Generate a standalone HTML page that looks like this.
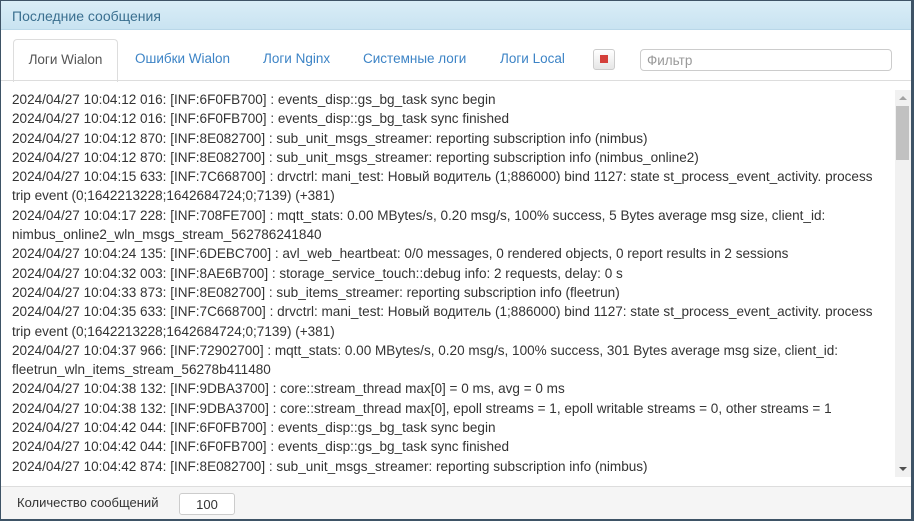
<!DOCTYPE html>
<html><head><meta charset="utf-8"><style>
*{box-sizing:border-box;margin:0;padding:0}
body{width:914px;height:521px;background:#3e5366;font-family:"Liberation Sans",Arial,sans-serif;overflow:hidden;position:relative}
.win{position:absolute;left:1px;top:1px;width:910px;height:518px;background:#fff;overflow:hidden}
.hdr{height:29px;background:linear-gradient(#d9edf7,#c9e3f1);border-bottom:1px solid #b9d7e8;color:#3a6f8f;font-size:14px;padding:7px 0 0 11px}
.tab{position:absolute;top:38px;height:42px;font-size:13.5px;color:#3d84c6;padding-top:12px}
.act{left:12px;width:105px;border:1px solid #ddd;border-bottom:none;border-radius:4px 4px 0 0;color:#555;text-align:center;background:#fff;height:43px}
.line{position:absolute;left:0;top:79px;width:910px;height:1px;background:#ddd}
.btn{position:absolute;left:592px;top:48px;width:22px;height:21px;border:1px solid #ccc;border-radius:3px;background:linear-gradient(#fff,#e6e6e6)}
.btn i{position:absolute;left:6px;top:5px;width:8px;height:8px;background:#d43f3a}
.flt{position:absolute;left:639px;top:48px;width:252px;height:22px;border:1px solid #ccc;border-radius:4px;font-size:13.5px;color:#999;padding:3px 0 0 6px}
.log{position:absolute;left:11px;top:89px;font-size:13.55px;color:#333;line-height:19.3px;white-space:nowrap}
.sb{position:absolute;left:894px;top:89px;width:16px;height:387px;background:#f1f1f1}
.th{position:absolute;left:1px;top:16px;width:13px;height:54px;background:#c1c1c1}
.ar{position:absolute;left:4px;width:0;height:0;border-left:4px solid transparent;border-right:4px solid transparent}
.ft{position:absolute;left:0;top:485px;width:910px;height:33px;background:#f5f5f5;border-top:1px solid #ddd;font-size:13px;color:#333;padding:8px 0 0 16px}
.cnt{position:absolute;left:178px;top:6px;width:56px;height:22px;border:1px solid #ccc;border-radius:3px;background:#fff;text-align:center;padding-top:3px}
</style></head><body><div class="win">
<div class="hdr">Последние сообщения</div>
<div class="tab act">Логи Wialon</div>
<div class="tab" style="left:134px">Ошибки Wialon</div>
<div class="tab" style="left:262px">Логи Nginx</div>
<div class="tab" style="left:362px">Системные логи</div>
<div class="tab" style="left:499px">Логи Local</div>
<div class="btn"><i></i></div>
<div class="flt">Фильтр</div>
<div class="line"></div>
<div class="log">
2024/04/27 10:04:12 016: [INF:6F0FB700] : events_disp::gs_bg_task sync begin<br>
2024/04/27 10:04:12 016: [INF:6F0FB700] : events_disp::gs_bg_task sync finished<br>
2024/04/27 10:04:12 870: [INF:8E082700] : sub_unit_msgs_streamer: reporting subscription info (nimbus)<br>
2024/04/27 10:04:12 870: [INF:8E082700] : sub_unit_msgs_streamer: reporting subscription info (nimbus_online2)<br>
2024/04/27 10:04:15 633: [INF:7C668700] : drvctrl: mani_test: Новый водитель (1;886000) bind 1127: state st_process_event_activity. process<br>
trip event (0;1642213228;1642684724;0;7139) (+381)<br>
2024/04/27 10:04:17 228: [INF:708FE700] : mqtt_stats: 0.00 MBytes/s, 0.20 msg/s, 100% success, 5 Bytes average msg size, client_id:<br>
nimbus_online2_wln_msgs_stream_562786241840<br>
2024/04/27 10:04:24 135: [INF:6DEBC700] : avl_web_heartbeat: 0/0 messages, 0 rendered objects, 0 report results in 2 sessions<br>
2024/04/27 10:04:32 003: [INF:8AE6B700] : storage_service_touch::debug info: 2 requests, delay: 0 s<br>
2024/04/27 10:04:33 873: [INF:8E082700] : sub_items_streamer: reporting subscription info (fleetrun)<br>
2024/04/27 10:04:35 633: [INF:7C668700] : drvctrl: mani_test: Новый водитель (1;886000) bind 1127: state st_process_event_activity. process<br>
trip event (0;1642213228;1642684724;0;7139) (+381)<br>
2024/04/27 10:04:37 966: [INF:72902700] : mqtt_stats: 0.00 MBytes/s, 0.20 msg/s, 100% success, 301 Bytes average msg size, client_id:<br>
fleetrun_wln_items_stream_56278b411480<br>
2024/04/27 10:04:38 132: [INF:9DBA3700] : core::stream_thread max[0] = 0 ms, avg = 0 ms<br>
2024/04/27 10:04:38 132: [INF:9DBA3700] : core::stream_thread max[0], epoll streams = 1, epoll writable streams = 0, other streams = 1<br>
2024/04/27 10:04:42 044: [INF:6F0FB700] : events_disp::gs_bg_task sync begin<br>
2024/04/27 10:04:42 044: [INF:6F0FB700] : events_disp::gs_bg_task sync finished<br>
2024/04/27 10:04:42 874: [INF:8E082700] : sub_unit_msgs_streamer: reporting subscription info (nimbus)
</div>
<div class="sb"><div class="ar" style="top:6px;border-bottom:4px solid #a3a3a3"></div><div class="th"></div><div class="ar" style="bottom:6px;border-top:4px solid #505050"></div></div>
<div class="ft">Количество сообщений<div class="cnt">100</div></div>
</div></body></html>
